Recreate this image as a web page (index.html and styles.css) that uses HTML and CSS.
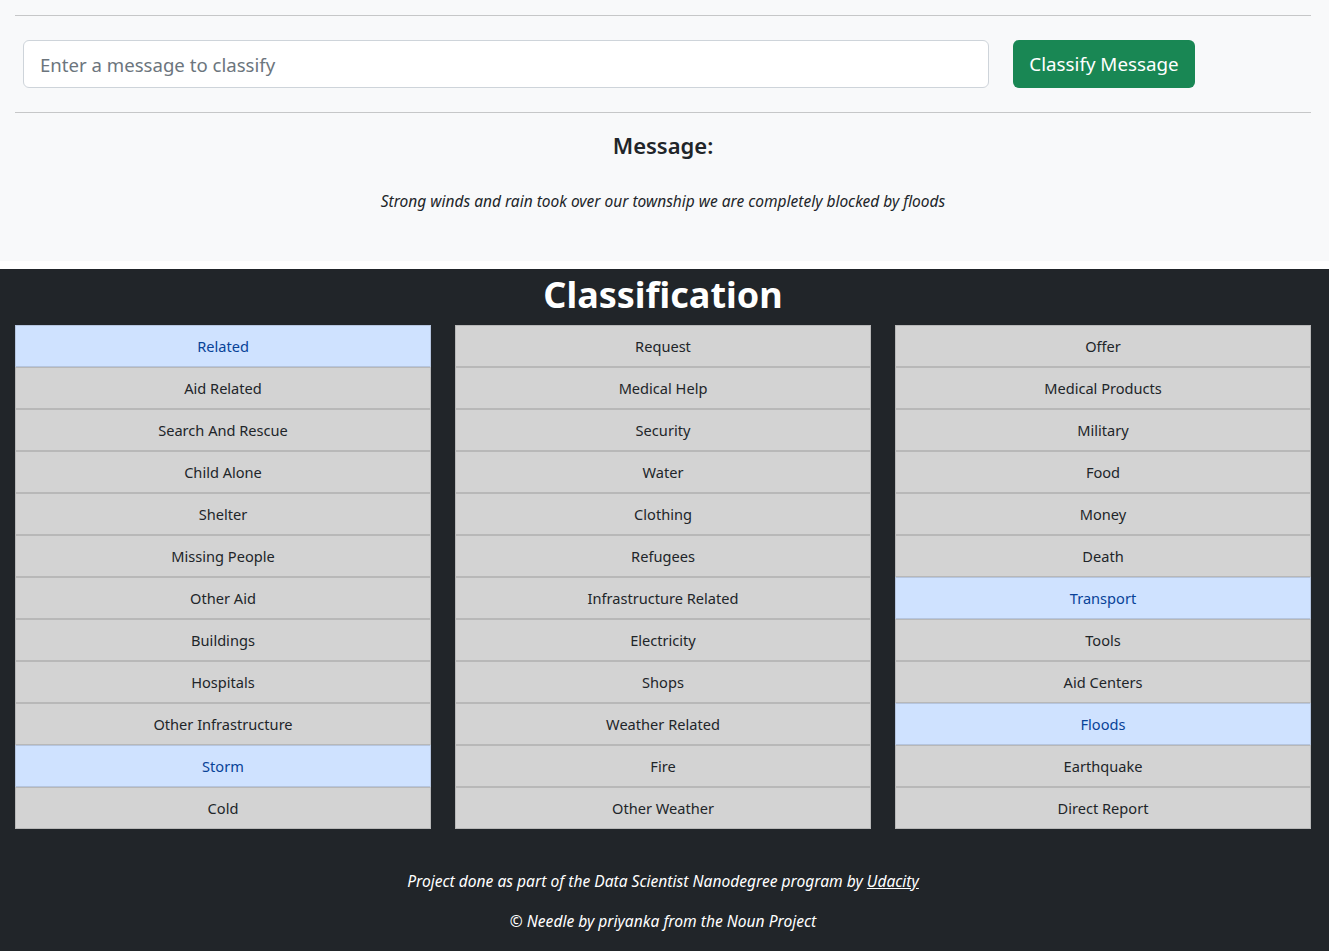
FILE: index.html
```html
<!DOCTYPE html>
<html lang="en">
<head>
<meta charset="utf-8">
<title>Disaster Response</title>
<link rel="stylesheet" href="styles.css">
</head>
<body>
<section class="top">
  <hr class="rule">
  <form class="classify-form">
    <input class="msg-input" type="text" placeholder="Enter a message to classify">
    <button class="btn-classify" type="button">Classify Message</button>
  </form>
  <hr class="rule">
  <h2 class="msg-title">Message:</h2>
  <p class="msg-text">Strong winds and rain took over our township we are completely blocked by floods</p>
</section>
<section class="results">
  <h1 class="results-title">Classification</h1>
  <div class="cols">
    <ul class="cat-list">
      <li class="cat on">Related</li>
      <li class="cat">Aid Related</li>
      <li class="cat">Search And Rescue</li>
      <li class="cat">Child Alone</li>
      <li class="cat">Shelter</li>
      <li class="cat">Missing People</li>
      <li class="cat">Other Aid</li>
      <li class="cat">Buildings</li>
      <li class="cat">Hospitals</li>
      <li class="cat">Other Infrastructure</li>
      <li class="cat on">Storm</li>
      <li class="cat">Cold</li>
    </ul>
    <ul class="cat-list">
      <li class="cat">Request</li>
      <li class="cat">Medical Help</li>
      <li class="cat">Security</li>
      <li class="cat">Water</li>
      <li class="cat">Clothing</li>
      <li class="cat">Refugees</li>
      <li class="cat">Infrastructure Related</li>
      <li class="cat">Electricity</li>
      <li class="cat">Shops</li>
      <li class="cat">Weather Related</li>
      <li class="cat">Fire</li>
      <li class="cat">Other Weather</li>
    </ul>
    <ul class="cat-list">
      <li class="cat">Offer</li>
      <li class="cat">Medical Products</li>
      <li class="cat">Military</li>
      <li class="cat">Food</li>
      <li class="cat">Money</li>
      <li class="cat">Death</li>
      <li class="cat on">Transport</li>
      <li class="cat">Tools</li>
      <li class="cat">Aid Centers</li>
      <li class="cat on">Floods</li>
      <li class="cat">Earthquake</li>
      <li class="cat">Direct Report</li>
    </ul>
  </div>
  <footer class="foot">
    <p class="foot-line">Project done as part of the Data Scientist Nanodegree program by <a class="foot-link" href="#">Udacity</a></p>
    <p class="foot-line">© Needle by priyanka from the Noun Project</p>
  </footer>
</section>
</body>
</html>
```

FILE: styles.css
```css
* { box-sizing: border-box; }
html, body {
  margin: 0;
  padding: 0;
}
body {
  background: #ffffff;
  font-family: "Noto Sans", "Open Sans", "DejaVu Sans", sans-serif;
  font-size: 16px;
  line-height: 24px;
  color: #212529;
}
.top {
  background: #f8f9fa;
  padding: 15px 18px 0 15px;
  height: 261px;
}
.rule {
  margin: 0;
  border: 0;
  border-top: 1px solid #c6c7c8;
  height: 0;
}
.classify-form {
  display: flex;
  gap: 24px;
  margin: 24px 0 24px 8px;
}
.msg-input {
  width: 966px;
  height: 48px;
  border: 1px solid #ced4da;
  border-radius: 6px;
  background: #fff;
  padding: 0 16px;
  font-family: inherit;
  font-size: 18.6px;
  color: #212529;
}
.msg-input::placeholder { color: #6c757d; }
.btn-classify {
  width: 182px;
  height: 48px;
  border: 0;
  border-radius: 6px;
  background: #198754;
  color: #fff;
  font-family: inherit;
  font-size: 18.8px;
  padding: 0;
}
.msg-title {
  margin: 18px 0 0;
  text-align: center;
  font-size: 22px;
  line-height: 29px;
  font-weight: 600;
}
.msg-text {
  margin: 29px 0 0;
  text-align: center;
  font-style: italic;
  font-size: 15.5px;
}
.results {
  margin-top: 8px;
  background: #212529;
  padding: 2px 18px 18px 15px;
  min-height: 682px;
}
.results-title {
  margin: 0 0 6px;
  text-align: center;
  color: #fff;
  font-size: 36px;
  line-height: 48px;
  font-weight: 700;
}
.cols {
  display: grid;
  grid-template-columns: repeat(3, 1fr);
  gap: 24px;
}
.cat-list {
  list-style: none;
  margin: 0;
  padding: 0;
}
.cat {
  height: 42px;
  background: #d3d3d3;
  border: 1px solid rgba(0, 0, 0, 0.125);
  padding: 8px 16px;
  text-align: center;
  font-size: 14.6px;
  color: #212529;
}
.cat.on {
  background: #cfe2ff;
  color: #084298;
}
.foot {
  margin-top: 40px;
  text-align: center;
  color: #fff;
  font-style: italic;
  font-size: 15.6px;
}
.foot-line { margin: 0 0 16px; }
.foot-link { color: #fff; text-decoration: underline; }
```
